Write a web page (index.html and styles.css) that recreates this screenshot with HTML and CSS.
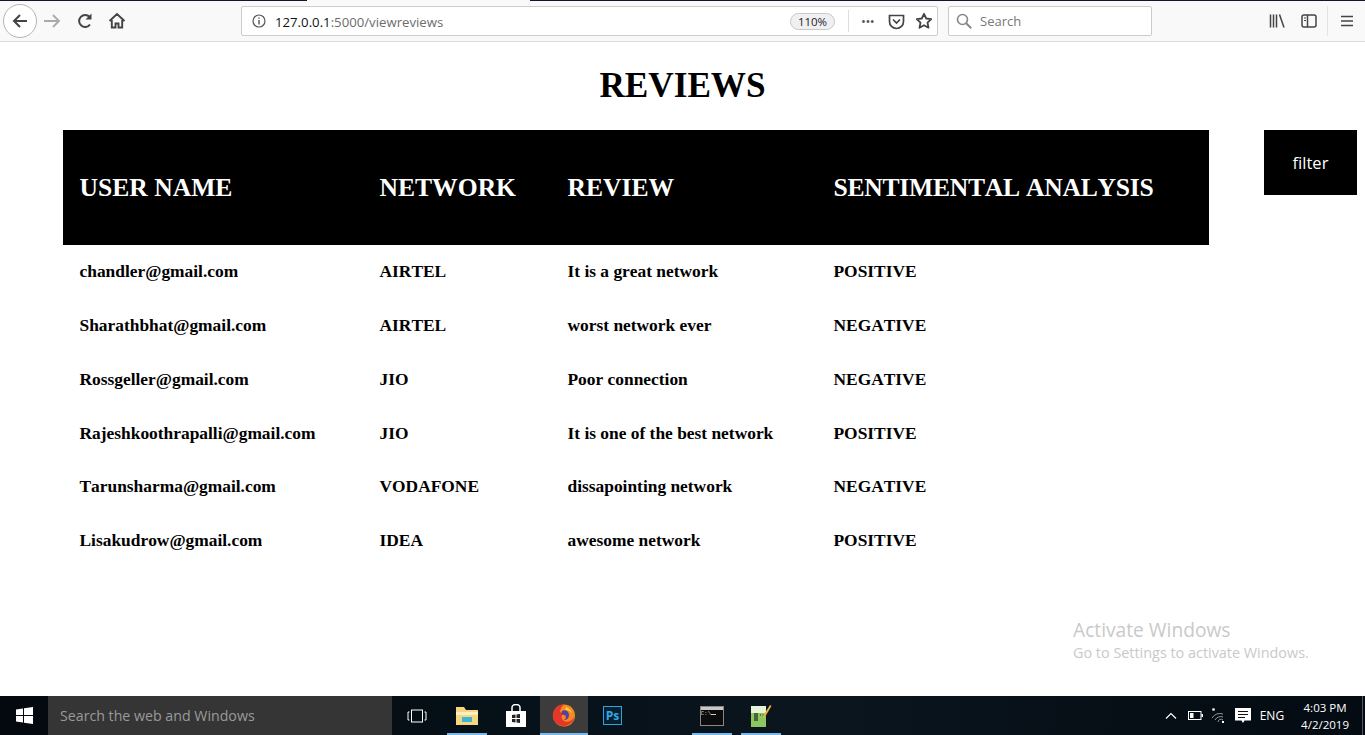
FILE: index.html
```html
<!doctype html>
<html>
<head>
<meta charset="utf-8">
<link rel="stylesheet" href="styles.css">
<title>Reviews</title>
</head>
<body>
<div class="topstrip"><span class="strip-a"></span><span class="strip-b"></span><span class="strip-c"></span></div>
<header class="toolbar">
  <div class="nav">
    <span class="back">
      <svg width="20" height="20" viewBox="0 0 20 20"><path d="M17 10H4M10 4l-6 6 6 6" fill="none" stroke="#444" stroke-width="2"/></svg>
    </span>
    <svg class="fwd" width="20" height="20" viewBox="0 0 20 20"><path d="M2 10h15M11 4l6 6-6 6" fill="none" stroke="#aaa" stroke-width="1.8"/></svg>
    <svg class="reload" width="18" height="18" viewBox="0 0 18 18"><path d="M14 12.5A6 6 0 1 1 13.6 5" fill="none" stroke="#444" stroke-width="2"/><path d="M15.5 1.5v6h-6z" fill="#444"/></svg>
    <svg class="home" width="18" height="18" viewBox="0 0 18 18"><path d="M1.500 9L9 2l7.500 7M3.800 8v7.500h3.700v-4h3v4h3.700V8" fill="none" stroke="#444" stroke-width="1.900"/></svg>
  </div>
  <div class="urlbar">
    <svg class="info" width="14" height="14" viewBox="0 0 14 14"><circle cx="7" cy="7" r="6" fill="none" stroke="#555" stroke-width="1.200"/><path d="M7 6v4.500M7 3.500v1.300" stroke="#555" stroke-width="1.400"/></svg>
    <span class="url"><b>127.0.0.1</b>:5000/viewreviews</span>
    <span class="zoomlevel">110%</span>
    <span class="sep"></span>
    <span class="dots">&bull;&bull;&bull;</span>
    <svg class="pocket" width="17" height="17" viewBox="0 0 17 17"><path d="M1.500 2.500h14v6a7 7 0 0 1-14 0z" fill="none" stroke="#444" stroke-width="1.700"/><path d="M5 6.500l3.500 3.500L12 6.500" fill="none" stroke="#444" stroke-width="1.700"/></svg>
    <svg class="star" width="18" height="18" viewBox="0 0 18 18"><path d="M9 1.800l2.200 4.700 5 .6-3.700 3.500 1 5.100L9 13.200l-4.500 2.500 1-5.100L1.800 7.100l5-.6z" fill="none" stroke="#444" stroke-width="1.800" stroke-linejoin="round"/></svg>
  </div>
  <div class="searchbar">
    <svg width="16" height="16" viewBox="0 0 16 16"><circle cx="6.500" cy="6.500" r="5" fill="none" stroke="#888" stroke-width="1.600"/><path d="M10.200 10.200l5 5" stroke="#888" stroke-width="2"/></svg>
    <span>Search</span>
  </div>
  <div class="tools">
    <svg width="17" height="16" viewBox="0 0 17 16"><path d="M1.500 1.500v13M4.500 1.500v13M7.500 1.500v13M10.500 1.500l4.500 13" stroke="#444" stroke-width="1.500" fill="none"/></svg>
    <svg class="sidebar" width="16" height="14" viewBox="0 0 16 14"><rect x="1" y="1" width="14" height="12" rx="2" fill="none" stroke="#444" stroke-width="1.500"/><path d="M6.500 1v12" stroke="#444" stroke-width="1.500"/><path d="M3 4h2M3 6.500h2" stroke="#444"/></svg>
    <span class="toolsep"></span>
    <svg class="menu" width="14" height="12" viewBox="0 0 14 12"><path d="M1 1.500h12M1 6h12M1 10.500h12" stroke="#444" stroke-width="1.600"/></svg>
  </div>
</header>

<main class="page">
  <h1>REVIEWS</h1>
  <div class="content">
    <table class="reviews">
      <thead>
        <tr><th class="col-user">USER NAME</th><th class="col-net">NETWORK</th><th class="col-review">REVIEW</th><th class="col-sent">SENTIMENTAL ANALYSIS</th></tr>
      </thead>
      <tbody>
        <tr><td>chandler@gmail.com</td><td>AIRTEL</td><td>It is a great network</td><td>POSITIVE</td></tr>
        <tr><td>Sharathbhat@gmail.com</td><td>AIRTEL</td><td>worst network ever</td><td>NEGATIVE</td></tr>
        <tr><td>Rossgeller@gmail.com</td><td>JIO</td><td>Poor connection</td><td>NEGATIVE</td></tr>
        <tr><td>Rajeshkoothrapalli@gmail.com</td><td>JIO</td><td>It is one of the best network</td><td>POSITIVE</td></tr>
        <tr class="row-short"><td>Tarunsharma@gmail.com</td><td>VODAFONE</td><td>dissapointing network</td><td>NEGATIVE</td></tr>
        <tr><td>Lisakudrow@gmail.com</td><td>IDEA</td><td>awesome network</td><td>POSITIVE</td></tr>
      </tbody>
    </table>
    <a class="filter">filter</a>
  </div>
  <div class="activate">
    <div class="act-title">Activate Windows</div>
    <div class="act-sub">Go to Settings to activate Windows.</div>
  </div>
</main>

<footer class="taskbar">
  <svg class="winlogo" width="17" height="17" viewBox="0 0 17 17"><path d="M0 2.500l7-1v6.500H0zM8 1.300L17 0v8H8zM0 9h7v6.500l-7-1zM8 9h9v8l-9-1.300z" fill="#fff"/></svg>
  <div class="tasksearch">Search the web and Windows</div>
  <div class="apps">
    <span class="app taskview"><svg width="20" height="14" viewBox="0 0 20 14"><rect x="4.500" y="1" width="11" height="12" fill="none" stroke="#fff"/><path d="M2.500 3H1v8h1.500M17.500 3H19v8h-1.500" fill="none" stroke="#fff"/></svg></span>
    <span class="app running"><svg width="22" height="20" viewBox="0 0 22 20"><path d="M0 1h8l2 3h12v15H0z" fill="#f6d77f"/><path d="M0 6h22v3H0z" fill="#fdf0c0"/><path d="M6 11h10v5H6z" fill="#3fb4d8"/></svg></span>
    <span class="app"><svg width="22" height="24" viewBox="0 0 22 24"><path d="M1 7h20v16H1z" fill="#fff"/><path d="M7 7V3.500a4 3 0 0 1 8 0V7" fill="none" stroke="#fff" stroke-width="1.500"/><path d="M7 11l3.500-.5V14H7zM11.500 10.400l3.500-.4V14h-3.500zM7 15h3.500v3.500L7 18zM11.500 15H15v4l-3.500-.4z" fill="#222"/></svg></span>
    <span class="app active"><svg width="24" height="24" viewBox="0 0 24 24"><circle cx="12" cy="12.500" r="11" fill="#f58a1f"/><path d="M12 1.500a11 11 0 0 0-9 17.500c3 4 9 5 13 3 4-2 6-5 6-8-2 4-6 6-10 4-3-2-3-5-1-7l-3-2c0-3 2-6 4-7.500z" fill="#e5362b"/><path d="M10 8c3-2 7 0 7 4s-3 5-5 5c3-2 2-5 0-5l-3-1z" fill="#5a3fa0"/><path d="M14 4c3 1 5 3 6 6-2-2-4-3-7-3z" fill="#fcd23a"/></svg></span>
    <span class="app"><span class="ps">Ps</span></span>
    <span class="app running gap"><span class="cmd">C:\<i></i></span></span>
    <span class="app running"><svg width="22" height="24" viewBox="0 0 22 24"><path d="M1 2h15v21H1z" fill="#e8f2d8"/><path d="M1 9h15v14H1z" fill="#8cc660"/><path d="M5 9v8M7 9v8M10 11h1M12.500 11h1" stroke="#222" stroke-width="1.200"/><path d="M13 12L20 1l1.500 1L15 13l-2 1z" fill="#e3b23c"/></svg></span>
  </div>
  <div class="tray">
    <svg width="12" height="7" viewBox="0 0 12 7"><path d="M1 6.500l5-5 5 5" fill="none" stroke="#fff" stroke-width="1.200"/></svg>
    <svg class="battery" width="15" height="9" viewBox="0 0 15 9"><rect x=".5" y=".5" width="12.500" height="8" fill="none" stroke="#fff"/><rect x="2" y="2" width="3.500" height="5" fill="#fff"/><rect x="13.500" y="3" width="1.500" height="3" fill="#fff"/></svg>
    <svg class="wifi" width="16" height="16" viewBox="0 0 16 16"><path d="M3 1.500h3M4.500 0v3M3.300.5l2.400 2M5.700.5L3.300 2.500" stroke="#fff" stroke-width=".7"/><path d="M3 10a10 10 0 0 1 11-4M6 12a6.500 6.500 0 0 1 8-3M9 14a3 3 0 0 1 5-2" fill="none" stroke="#999"/><path d="M13 13h2v2h-2z" fill="#fff"/></svg>
    <svg class="notify" width="16" height="16" viewBox="0 0 16 16"><path d="M0 0h16v12.500H9.500L8 15l-1.500-2.500H0z" fill="#fff"/><path d="M3 3.500h10M3 6.500h10M3 9.500h7" stroke="#111"/></svg>
    <span class="lang">ENG</span>
    <div class="clock"><div>4:03 PM</div><div>4/2/2019</div></div>
    <span class="showdesk"></span>
  </div>
</footer>
</body>
</html>
```

FILE: styles.css
```css
html, body {
    margin: 0;
    padding: 0;
    height: 735px;
    overflow: hidden;
}
body {
    display: flex;
    flex-direction: column;
    background: white;
    font-family: "Open Sans", "Noto Sans", sans-serif;
}

/* browser chrome */
.topstrip {
    display: flex;
    height: 1px;
    flex: none;
    background: #f9f9fa;
}
.strip-a {
    width: 307px;
    background: #14142a;
}
.strip-b {
    width: 223px;
}
.strip-c {
    flex: 1;
    background: #14142a;
}
.toolbar {
    display: flex;
    align-items: center;
    height: 41px;
    flex: none;
    box-sizing: border-box;
    background: #f9f9fa;
    border-bottom: 1px solid #ddd;
}
.nav {
    display: flex;
    align-items: center;
    width: 241px;
    flex: none;
    padding-left: 3px;
    box-sizing: border-box;
}
.back {
    display: flex;
    align-items: center;
    justify-content: center;
    width: 32px;
    height: 32px;
    border: 1px solid #b5b5b5;
    border-radius: 50%;
    background: white;
}
.fwd {
    margin-left: 5px;
}
.reload {
    margin-left: 14px;
}
.home {
    margin-left: 14px;
}
.urlbar {
    display: flex;
    align-items: center;
    width: 697px;
    height: 30px;
    flex: none;
    box-sizing: border-box;
    padding: 0 4px 0 10px;
    background: white;
    border: 1px solid #ccc;
    border-radius: 2px;
}
.url {
    margin-left: 9px;
    padding-top: 1px;
    flex: 1;
    font-size: 13.200px;
    color: #6d6d6d;
}
.url b {
    font-weight: normal;
    color: #111;
}
.zoomlevel {
    width: 43px;
    height: 15px;
    line-height: 15px;
    text-align: center;
    font-size: 11.500px;
    color: #222;
    background: #f0f0f2;
    border: 1px solid #c8c8c8;
    border-radius: 9px;
}
.sep {
    width: 1px;
    height: 22px;
    margin: 0 12px 0 13px;
    background: #ddd;
}
.dots {
    font-size: 13px;
    letter-spacing: -0.500px;
    color: #555;
    width: 20px;
}
.pocket {
    margin-left: 7px;
}
.star {
    margin-left: 10px;
}
.searchbar {
    display: flex;
    align-items: center;
    gap: 8px;
    width: 204px;
    height: 30px;
    flex: none;
    box-sizing: border-box;
    margin-left: 10px;
    padding-left: 7px;
    background: white;
    border: 1px solid #ccc;
    border-radius: 2px;
    font-size: 13px;
    color: #777;
}
.tools {
    display: flex;
    align-items: center;
    margin-left: 117px;
}
.sidebar {
    margin-left: 15px;
}
.toolsep {
    width: 1px;
    height: 30px;
    margin-left: 10px;
    background: #e4e4e4;
}
.menu {
    margin-left: 12px;
}

/* page */
.page {
    position: relative;
    flex: 1;
}
h1 {
    margin: 0;
    height: 88px;
    line-height: 88px;
    text-align: center;
    font-family: "Liberation Serif", serif;
    font-size: 35.200px;
    color: black;
}
.content {
    display: flex;
    align-items: flex-start;
    padding-left: 63px;
}
table.reviews {
    width: 1146px;
    table-layout: fixed;
    border-collapse: collapse;
    font-family: "Liberation Serif", serif;
    font-weight: bold;
    font-kerning: none;
    color: black;
}
th {
    height: 115px;
    padding: 0 16.500px;
    text-align: left;
    font-size: 25.600px;
    background: black;
    color: white;
}
.col-user {
    width: 267px;
}
.col-net {
    width: 155px;
}
.col-review {
    width: 233px;
}
.col-sent {
    letter-spacing: -0.250px;
}
td {
    height: 52px;
    padding: 0 16.500px 2px;
    font-size: 17.400px;
    white-space: nowrap;
}
.row-short td {
    height: 51px;
}
.filter {
    display: block;
    width: 93px;
    height: 65px;
    line-height: 65px;
    flex: none;
    margin-left: 55px;
    text-align: center;
    background: black;
    color: white;
    font-size: 16.500px;
}
.activate {
    position: absolute;
    left: 1073px;
    top: 575px;
    color: #c9c9c9;
}
.act-title {
    font-size: 19.200px;
    line-height: 25px;
}
.act-sub {
    font-size: 14.400px;
    line-height: 22px;
}

/* windows taskbar */
.taskbar {
    display: flex;
    align-items: center;
    height: 39px;
    flex: none;
    color: white;
    background: linear-gradient(90deg, #03090f, #07121a 45%, #0a151d 60%, #040b12);
}
.winlogo {
    margin-left: 16px;
    width: 17px;
    flex: none;
}
.tasksearch {
    display: flex;
    align-items: center;
    height: 39px;
    width: 344px;
    flex: none;
    box-sizing: border-box;
    margin-left: 15px;
    padding-left: 12px;
    background: #353535;
    color: #9a9a9a;
    font-size: 14.200px;
}
.apps {
    display: flex;
    height: 39px;
}
.app {
    display: flex;
    align-items: center;
    justify-content: center;
    width: 49px;
    height: 39px;
    box-sizing: border-box;
}
.taskview {
    width: 50px;
}
.running {
    background: linear-gradient(#76b9ed, #76b9ed) center bottom / 40px 2px no-repeat;
}
.active {
    width: 48px;
    background: #3c3c3c;
    border-bottom: 2px solid #76b9ed;
}
.gap {
    margin-left: 50px;
}
.ps {
    width: 19px;
    height: 19px;
    line-height: 18px;
    text-align: center;
    box-sizing: border-box;
    border: 1.500px solid #2fa3e0;
    background: #06202f;
    color: #35a8e6;
    font-size: 12px;
    font-weight: bold;
}
.cmd {
    display: block;
    width: 22px;
    height: 18px;
    box-sizing: border-box;
    border-top: 3px solid #c8c8c8;
    background: #0c0c0c;
    outline: 1px solid #888;
    color: #ccc;
    font-family: "Liberation Mono", monospace;
    font-size: 6px;
    line-height: 8px;
}
.cmd i {
    display: inline-block;
    width: 5px;
    border-bottom: 1px solid #ccc;
}
.tray {
    display: flex;
    align-items: center;
    margin-left: auto;
}
.battery {
    margin-left: 11px;
}
.wifi {
    margin-left: 6px;
}
.notify {
    margin-left: 10px;
}
.lang {
    margin-left: 9px;
    font-size: 12px;
}
.clock {
    margin-left: 17px;
    text-align: center;
    font-size: 11.500px;
    line-height: 17px;
}
.showdesk {
    width: 1px;
    height: 39px;
    margin: 0 2px 0 13px;
    background: #556;
}
```
